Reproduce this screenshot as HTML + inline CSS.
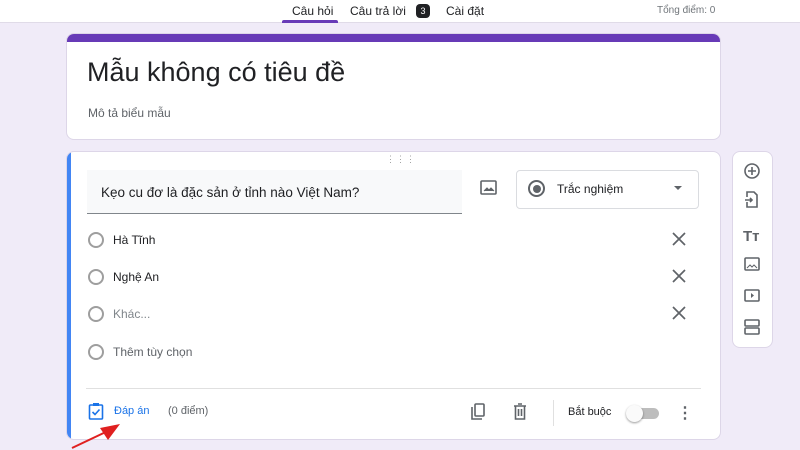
<!DOCTYPE html><html><head><meta charset="utf-8"><style>
*{margin:0;padding:0;box-sizing:border-box}
body{width:800px;height:450px;overflow:hidden;background:#f0ebf8;font-family:"Liberation Sans","Noto Sans CJK JP",sans-serif;position:relative;color:#202124}
.a{position:absolute}
.top{left:0;top:0;width:800px;height:23px;background:#fff;border-bottom:1px solid #e0dbe8}
.card{background:#fff;border-radius:8px;border:1px solid #ddd6e8}
.radio{width:16px;height:16px;border:2px solid #9e9e9e;border-radius:50%}
</style></head><body>
<div class="a top"></div>
<div class="a" style="left:292px;top:4px;font-size:12px;color:#202124">Câu hỏi</div>
<div class="a" style="left:282px;top:20px;width:56px;height:3px;background:#673ab7;border-radius:2px 2px 0 0"></div>
<div class="a" style="left:350px;top:4px;font-size:12px;color:#202124">Câu trả lời</div>
<div class="a" style="left:416px;top:4px;width:14px;height:14px;border-radius:4px;background:#202124;color:#fff;font-size:9px;text-align:center;line-height:14px">3</div>
<div class="a" style="left:446px;top:4px;font-size:12px">Cài đặt</div>
<div class="a" style="left:657px;top:5px;font-size:10px;color:#70757a">Tổng điểm: 0</div>

<div class="a card" style="left:66px;top:33px;width:655px;height:107px;overflow:hidden">
<div style="height:8px;background:#673ab7"></div></div>
<div class="a" style="left:87px;top:57px;font-size:27px">Mẫu không có tiêu đề</div>
<div class="a" style="left:88px;top:106px;font-size:12px;color:#5f6368">Mô tả biểu mẫu</div>

<div class="a card" style="left:66px;top:151px;width:655px;height:289px;overflow:hidden">
<div style="position:absolute;left:0;top:0;bottom:0;width:4px;background:#4285f4"></div></div>
<div class="a" style="left:386px;top:154px;font-size:9px;color:#9e9e9e;letter-spacing:1px">⋮⋮⋮</div>
<div class="a" style="left:87px;top:170px;width:375px;height:44px;background:#f8f9fa;border-bottom:1px solid #80868b"></div>
<div class="a" style="left:101px;top:185px;font-size:13.5px">Kẹo cu đơ là đặc sản ở tỉnh nào Việt Nam?</div>
<svg class="a" style="left:480px;top:180px" width="17" height="15" viewBox="0 0 17 15" fill="none" stroke="#5f6368" stroke-width="1.6"><rect x="1" y="1" width="15" height="13" rx="1"/><path d="M4 11l3-3 2 2 2-2 3 3" fill="#5f6368" stroke-width="1"/></svg>
<div class="a" style="left:516px;top:170px;width:183px;height:39px;border:1px solid #dadce0;border-radius:4px"></div>
<div class="a" style="left:528px;top:180px;width:17px;height:17px;border:2px solid #5f6368;border-radius:50%"><div style="margin:2.5px;width:8px;height:8px;border-radius:50%;background:#5f6368"></div></div>
<div class="a" style="left:557px;top:182px;font-size:12px">Trắc nghiệm</div>
<div class="a" style="left:674px;top:186px;width:0;height:0;border-left:4px solid transparent;border-right:4px solid transparent;border-top:4px solid #5f6368"></div>

<div class="a radio" style="left:88px;top:232px"></div><div class="a" style="left:113px;top:233px;font-size:12px">Hà Tĩnh</div>
<div class="a radio" style="left:88px;top:269px"></div><div class="a" style="left:113px;top:270px;font-size:12px">Nghệ An</div>
<div class="a radio" style="left:88px;top:306px"></div><div class="a" style="left:113px;top:307px;font-size:12px;color:#80868b">Khác...</div>
<div class="a radio" style="left:88px;top:344px"></div><div class="a" style="left:113px;top:345px;font-size:12px;color:#5f6368">Thêm tùy chọn</div>
<svg class="a" style="left:672px;top:232px" width="14" height="90" fill="none" stroke="#5f6368" stroke-width="1.7"><path d="M1 1l12 12M13 1L1 13M1 38l12 12M13 38L1 50M1 75l12 12M13 75L1 87"/></svg>

<div class="a" style="left:86px;top:388px;width:615px;height:1px;background:#e0e0e0"></div>
<svg class="a" style="left:88px;top:402px" width="16" height="18" viewBox="0 0 16 18"><rect x="1.5" y="3" width="13" height="14" rx="1" fill="none" stroke="#1a73e8" stroke-width="1.6"/><rect x="5" y="1" width="6" height="3" fill="#1a73e8"/><path d="M4.5 10l2.5 2.5 4.5-5" fill="none" stroke="#1a73e8" stroke-width="1.6"/></svg>
<div class="a" style="left:114px;top:405px;font-size:11px;color:#1a73e8">Đáp án</div>
<div class="a" style="left:168px;top:405px;font-size:11px;color:#5f6368">(0 điểm)</div>
<svg class="a" style="left:470px;top:403px" width="16" height="17" viewBox="0 0 16 17"><path d="M2 4v12h10" fill="none" stroke="#5f6368" stroke-width="1.6"/><rect x="5" y="1" width="9" height="12" rx="1" fill="none" stroke="#5f6368" stroke-width="1.6"/></svg>
<svg class="a" style="left:512px;top:403px" width="16" height="17" viewBox="0 0 16 17"><path d="M2 3h12M6 1h4M3.5 3v13h9V3M6.5 6v7M9.5 6v7" fill="none" stroke="#5f6368" stroke-width="1.6"/></svg>
<div class="a" style="left:553px;top:400px;width:1px;height:26px;background:#e0e0e0"></div>
<div class="a" style="left:568px;top:406px;font-size:11px">Bắt buộc</div>
<div class="a" style="left:631px;top:408px;width:28px;height:11px;border-radius:6px;background:#bdbdbd"></div>
<div class="a" style="left:626px;top:405px;width:17px;height:17px;border-radius:50%;background:#fafafa;box-shadow:0 1px 2px rgba(0,0,0,.4)"></div>
<div class="a" style="left:677px;top:403px;font-size:16px;color:#5f6368;font-weight:bold">⋮</div>
<svg class="a" style="left:70px;top:422px" width="60" height="28"><path d="M2 26L40 8" stroke="#e02020" stroke-width="2"/><path d="M50 2L30 6L38 18Z" fill="#e02020"/></svg>

<div class="a card" style="left:732px;top:151px;width:41px;height:197px"></div>
<svg class="a" style="left:743px;top:162px" width="18" height="180" viewBox="0 0 18 180" fill="none" stroke="#5f6368" stroke-width="1.6">
<circle cx="9" cy="9" r="7"/><path d="M9 5v8M5 9h8"/>
<path d="M4 35v-5h7l3 3v12H4v-5M2 38h7M7 36l2 2-2 2"/>
<text x="0" y="79" font-size="15" font-weight="bold" fill="#5f6368" stroke="none" font-family="Liberation Sans">Tт</text>
<rect x="2" y="96" width="14" height="12" rx="1"/><path d="M4 106l3-3 2 2 2-2 3 3" stroke-width="1"/>
<rect x="2" y="128" width="14" height="11" rx="1"/><path d="M8 131v5l3-2.5z" fill="#5f6368" stroke="none"/>
<rect x="2" y="158" width="14" height="6" rx="1"/><rect x="2" y="166" width="14" height="6" rx="1"/>
</svg>
</body></html>
